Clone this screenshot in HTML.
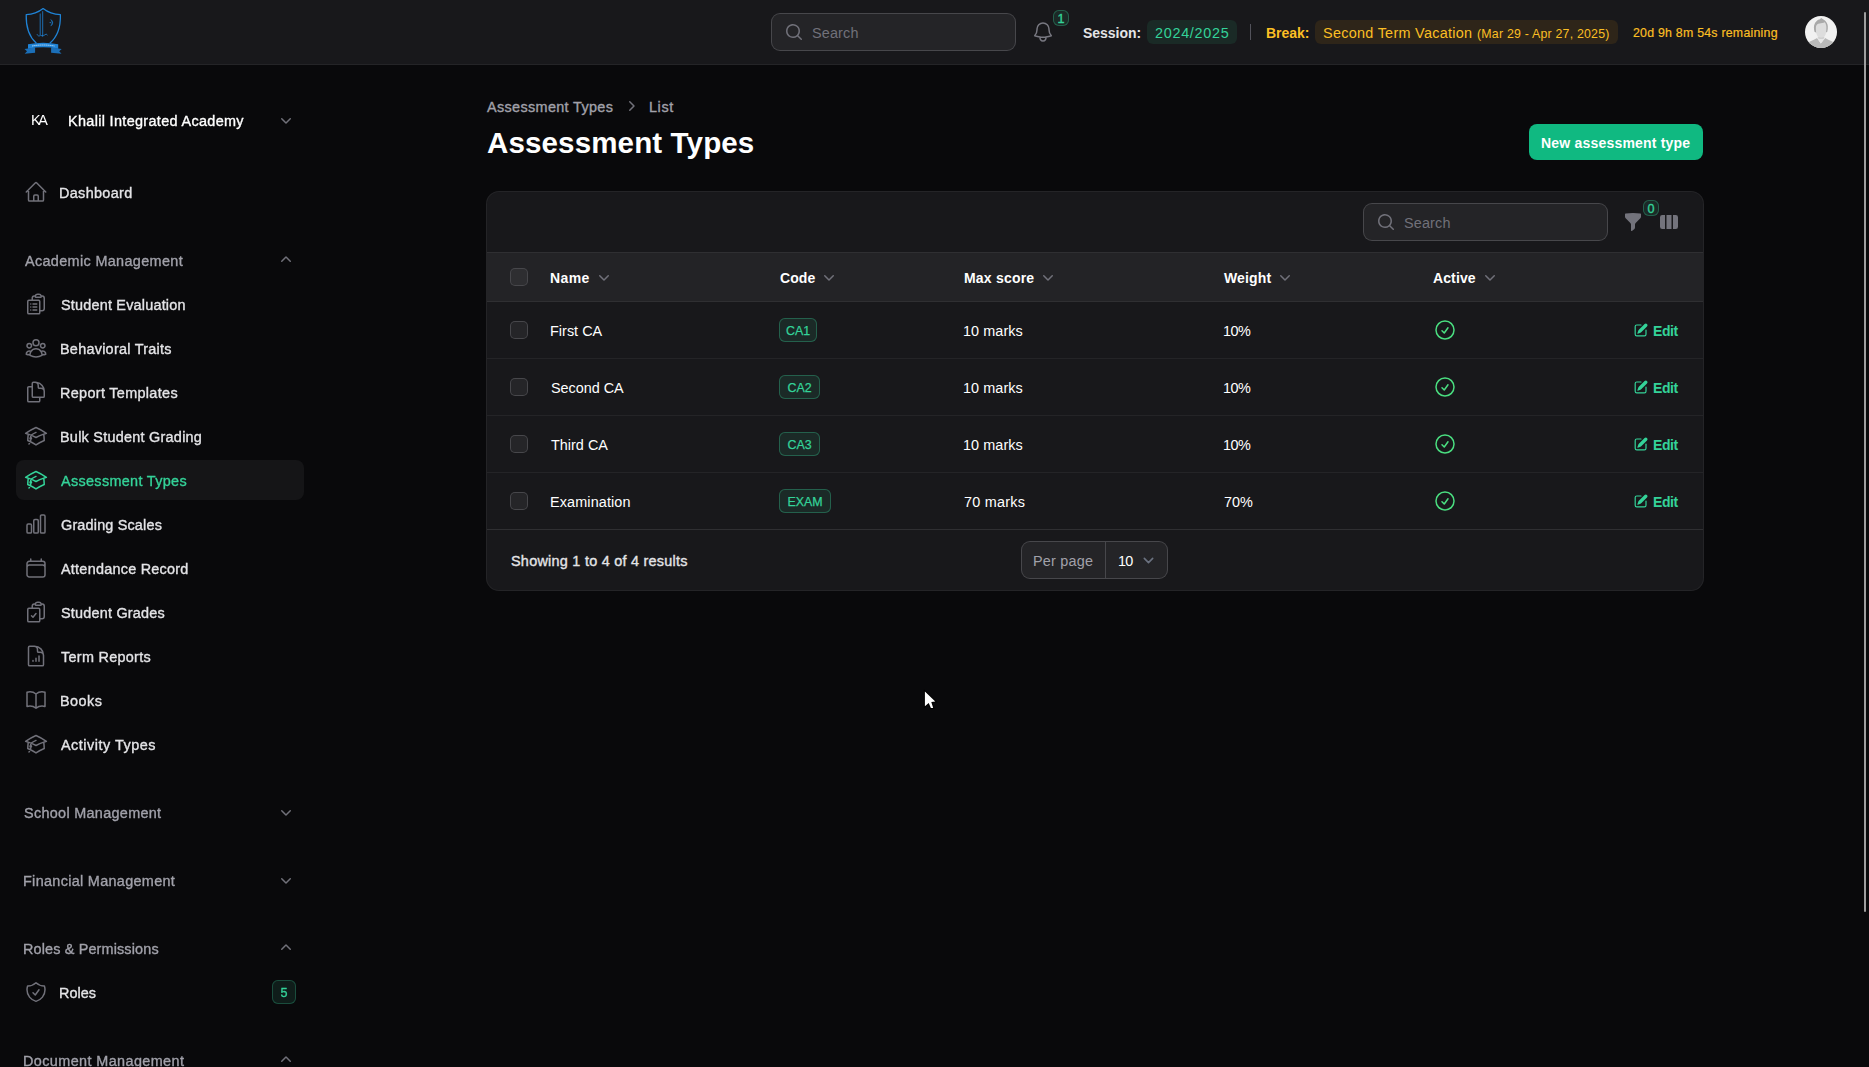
<!DOCTYPE html>
<html lang="en">
<head>
<meta charset="utf-8">
<title>Assessment Types - Khalil Integrated Academy</title>
<style>
*{box-sizing:border-box;margin:0;padding:0}
html,body{width:1869px;height:1067px;overflow:hidden;background:#09090b}
body{font-family:"Liberation Sans",sans-serif;font-size:14px;color:#fff;position:relative;-webkit-font-smoothing:antialiased}
.abs{position:absolute}
#sidebar{will-change:transform}
.t{position:absolute;white-space:nowrap;line-height:20px;height:20px}
.med{-webkit-text-stroke:.35px currentColor}
.med2{-webkit-text-stroke:.18px currentColor}
svg{display:block;position:absolute;overflow:visible}
.o{fill:none;stroke:currentColor;stroke-width:1.5;stroke-linecap:round;stroke-linejoin:round}
.f{fill:currentColor}
/* topbar */
#topbar{left:0;top:0;width:1869px;height:65px;background:#18181b;border-bottom:1px solid #242427}
.input{position:absolute;background:#242427;border-radius:8px;box-shadow:0 0 0 1px #47474b}
.ph{color:#71717a;font-size:15px}
.g4{color:#a1a1aa}.g5{color:#71717a}.g2{color:#e4e4e7}
.em{color:#34d399}
.badge{position:absolute;border-radius:6px;font-size:12.6px;text-align:center}
/* sidebar */
.si{position:absolute;left:24px;width:24px;height:24px;color:#71717a}
.sl{left:60px;color:#e4e4e7}
.gl{left:24px;color:#a1a1aa}
.chev{position:absolute;left:276px;width:20px;height:20px;color:#71717a}
/* table */
#card{left:487px;top:192px;width:1216px;height:398px;background:#18181b;border-radius:12px;box-shadow:0 0 0 1px #242427}
.hl{position:absolute;left:0;width:1216px;height:1px;background:#2b2b2e}
.cb{position:absolute;left:23px;width:17px;height:17px;border-radius:4px;background:#2a2a2d;box-shadow:0 0 0 1px #47474b}
.th{font-weight:700;color:#fff}
.td{color:#fff}
.code{position:absolute;height:24px;border-radius:6px;background:#1b2a27;box-shadow:inset 0 0 0 1px #24604c;color:#34d399;font-size:12.4px;letter-spacing:0px;line-height:26px;text-align:center;-webkit-text-stroke:.25px currentColor}
</style>
</head>
<body>
<!-- TOPBAR -->
<header id="topbar" class="abs">

<svg style="left:20px;top:4px" width="48" height="56" viewBox="20 4 48 56">
<path d="M43.1 8.6C38.4 12.4 32.4 14.5 26.2 14.7C25.9 25.5 29 36.6 36.4 43.2M43.1 8.6C47.8 12.4 53.8 14.5 60.4 14.7C60.7 25.5 57.6 36.6 49.8 43.2" fill="none" stroke="#1f83d6" stroke-width="1.25" stroke-linejoin="round"/>
<path d="M40.2 13.5V35.5M42.7 11.2V36.8" fill="none" stroke="#1f83d6" stroke-width=".8"/>
<path d="M37 34.2c.8 1.8 2.2 2.3 3.2 1.2M40.5 35.6c2 .3 4.2-.2 5.6-1.6l1.4 1.2" fill="none" stroke="#1f83d6" stroke-width=".8"/>
<path d="M50.6 19.4a3.6 3.6 0 0 1 0 6.6a4.6 4.6 0 0 0 0-6.6Z" fill="#1f83d6" stroke="#1f83d6" stroke-width=".3"/>
<circle cx="50.2" cy="22.6" r=".7" fill="#1f83d6"/>
<path d="M24.5 48.9l10.6-1.3v5.2l-10.4 1l2.3-2.6Z" fill="#1b6fb8"/>
<path d="M61.7 48.9l-10.6-1.3v5.2l10.4 1l-2.3-2.6Z" fill="#1b6fb8"/>
<path d="M28 44.2Q43.1 41.2 58.2 44.2V48.7Q43.1 45.9 28 48.7Z" fill="#1f83d6"/>
<path d="M32 46Q43.1 44 54.6 46" fill="none" stroke="#cfe6f8" stroke-width=".8" stroke-dasharray="1.6 .4"/>
</svg><div class="input" style="left:772px;top:14px;width:243px;height:36px"></div><svg style="left:784px;top:22px;color:#71717a" width="20" height="20" viewBox="0 0 20 20"><path class="f" fill-rule="evenodd" clip-rule="evenodd" d="M9 3.5a5.5 5.5 0 1 0 0 11 5.5 5.5 0 0 0 0-11ZM2 9a7 7 0 1 1 12.452 4.391l3.328 3.329a.75.75 0 1 1-1.06 1.06l-3.329-3.328A7 7 0 0 1 2 9Z"/></svg><svg style="left:1031px;top:20px;color:#787881" width="24" height="24" viewBox="0 0 24 24"><path class="o" stroke-width="1.5" d="M14.857 17.082a23.848 23.848 0 0 0 5.454-1.31A8.967 8.967 0 0 1 18 9.75V9A6 6 0 0 0 6 9v.75a8.967 8.967 0 0 1-2.312 6.022c1.733.64 3.56 1.085 5.455 1.31m5.714 0a24.255 24.255 0 0 1-5.714 0m5.714 0a3 3 0 1 1-5.714 0"/></svg><div class="badge em med" style="left:1053px;top:10px;width:16px;height:16px;line-height:18px;background:#1b2a27;box-shadow:inset 0 0 0 1px #24604c">1</div><div class="abs" style="left:1147px;top:20px;width:90px;height:24px;border-radius:6px;background:#1a2a26"></div><div class="abs" style="left:1250px;top:24px;width:1px;height:16px;background:#52525b"></div><div class="abs" style="left:1315px;top:20px;width:303px;height:24px;border-radius:6px;background:#2e2519"></div><svg style="left:1805px;top:16px" width="32" height="32" viewBox="0 0 32 32">
<defs><clipPath id="avc"><circle cx="16" cy="16" r="16"/></clipPath></defs>
<g clip-path="url(#avc)"><rect width="32" height="32" fill="#f1f1f1"/>
<path d="M2.5 28C3.6 25.8 6 24.9 8.4 24.1L12.1 22.1 15.8 27.4 20.1 22.1 23.8 24.1C26.2 24.9 28.6 25.8 29.7 28V33H2.5Z" fill="#b9b9b9"/>
<path d="M12.1 22.1L15.8 27.5 20.1 22.1 19.4 20.6H12.8Z" fill="#e7e7e7"/>
<path d="M13.2 20.5H19V22.4Q16.1 23.5 13.2 22.4Z" fill="#d0d0d0"/>
<path d="M9.5 15.8C8.7 12.4 8.7 9.8 9.6 8 10.5 6.1 11.9 4.5 13.2 3.8L14.5 3.4 16.2 2.1 17.7 3.1C19.3 3.9 20.7 5.1 21.7 6.7 22.9 8.7 23.3 11.2 22.3 15.8L21 16.6H11Z" fill="#a9a9a9"/>
<path d="M10.9 11.2C11 8.9 12.6 7.5 14.6 7.4 16.4 7.3 18.4 7.1 19.7 6.3 20.9 7.7 21.4 9.5 21.4 11.5 21.4 13.6 21.3 15.6 20.9 17.4 20.5 19.6 19 21.5 16.1 21.6 13.2 21.5 11.8 19.6 11.4 17.4 10.9 15.6 10.9 13.6 10.9 11.2Z" fill="#dddddd"/>
</g></svg>
<div class="t" style="left:812.0px;top:23.0px;font-size:14.42px;font-weight:400;letter-spacing:0.15px;color:#71717a">Search</div>
<div class="t" style="left:1083.0px;top:23.0px;font-size:14.0px;font-weight:700;letter-spacing:-0.03px;color:#e4e4e7">Session:</div>
<div class="t" style="left:1155.0px;top:23.0px;font-size:14.42px;font-weight:400;letter-spacing:0.70px;color:#34d399">2024/2025</div>
<div class="t" style="left:1266.0px;top:23.0px;font-size:14.0px;font-weight:700;letter-spacing:-0.02px;color:#fbbf24">Break:</div>
<div class="t" style="left:1323.0px;top:23.0px;font-size:14.42px;font-weight:400;letter-spacing:0.29px;color:#fbbf24">Second Term Vacation</div>
<div class="t" style="left:1477.0px;top:23.5px;font-size:12.36px;font-weight:400;letter-spacing:0.21px;color:#fbbf24">(Mar 29 - Apr 27, 2025)</div>
<div class="t med2" style="left:1633.0px;top:23.0px;font-size:12.36px;font-weight:400;letter-spacing:0.23px;color:#fbbf24">20d 9h 8m 54s remaining</div>

</header>
<!-- SIDEBAR -->
<nav id="sidebar" class="abs" style="left:0;top:65px;width:320px;height:1002px">
<svg style="left:276px;top:45px;color:#71717a" width="20" height="20" viewBox="0 0 20 20"><path class="f" fill-rule="evenodd" clip-rule="evenodd" d="M5.22 8.22a.75.75 0 0 1 1.06 0L10 11.94l3.72-3.72a.75.75 0 1 1 1.06 1.06l-4.25 4.25a.75.75 0 0 1-1.06 0L5.22 9.28a.75.75 0 0 1 0-1.06Z"/></svg><svg style="left:24px;top:115px;color:#71717a" width="24" height="24" viewBox="0 0 24 24"><path class="o" stroke-width="1.5" d="m2.25 12 8.954-8.955c.44-.439 1.152-.439 1.591 0L21.75 12M4.5 9.75v10.125c0 .621.504 1.125 1.125 1.125H9.75v-4.875c0-.621.504-1.125 1.125-1.125h2.25c.621 0 1.125.504 1.125 1.125V21h4.125c.621 0 1.125-.504 1.125-1.125V9.75M8.25 21h8.25"/></svg><svg style="left:276px;top:185px;color:#71717a" width="20" height="20" viewBox="0 0 20 20"><path class="f" fill-rule="evenodd" clip-rule="evenodd" d="M9.47 6.47a.75.75 0 0 1 1.06 0l4.25 4.25a.75.75 0 1 1-1.06 1.06L10 8.06l-3.72 3.72a.75.75 0 0 1-1.06-1.06l4.25-4.25Z"/></svg><div class="abs" style="left:16px;top:395px;width:288px;height:40px;border-radius:8px;background:#151517"></div><svg style="left:24px;top:227px;color:#71717a" width="24" height="24" viewBox="0 0 24 24"><path class="o" stroke-width="1.5" d="M9 12h3.75M9 15h3.75M9 18h3.75m3 .75H18a2.25 2.25 0 0 0 2.25-2.25V6.108c0-1.135-.845-2.098-1.976-2.192a48.424 48.424 0 0 0-1.123-.08m-5.801 0c-.065.21-.1.433-.1.664 0 .414.336.75.75.75h4.5a.75.75 0 0 0 .75-.75 2.25 2.25 0 0 0-.1-.664m-5.8 0A2.251 2.251 0 0 1 13.5 2.25H15c1.012 0 1.867.668 2.15 1.586m-5.8 0c-.376.023-.75.05-1.124.08C9.095 4.01 8.25 4.973 8.25 6.108V8.25m0 0H4.875c-.621 0-1.125.504-1.125 1.125v11.25c0 .621.504 1.125 1.125 1.125h9.75c.621 0 1.125-.504 1.125-1.125V9.375c0-.621-.504-1.125-1.125-1.125H8.25ZM6.75 12h.008v.008H6.75V12Zm0 3h.008v.008H6.75V15Zm0 3h.008v.008H6.75V18Z"/></svg><svg style="left:24px;top:271px;color:#71717a" width="24" height="24" viewBox="0 0 24 24"><path class="o" stroke-width="1.5" d="M18 18.72a9.094 9.094 0 0 0 3.741-.479 3 3 0 0 0-4.682-2.72m.94 3.198.001.031c0 .225-.012.447-.037.666A11.944 11.944 0 0 1 12 21c-2.17 0-4.207-.576-5.963-1.584A6.062 6.062 0 0 1 6 18.719m12 0a5.971 5.971 0 0 0-.941-3.197m0 0A5.995 5.995 0 0 0 12 12.75a5.995 5.995 0 0 0-5.058 2.772m0 0a3 3 0 0 0-4.681 2.72 8.986 8.986 0 0 0 3.74.477m.94-3.197a5.971 5.971 0 0 0-.94 3.197M15 6.75a3 3 0 1 1-6 0 3 3 0 0 1 6 0Zm6 3a2.25 2.25 0 1 1-4.5 0 2.25 2.25 0 0 1 4.5 0Zm-13.5 0a2.25 2.25 0 1 1-4.5 0 2.25 2.25 0 0 1 4.5 0Z"/></svg><svg style="left:24px;top:315px;color:#71717a" width="24" height="24" viewBox="0 0 24 24"><path class="o" stroke-width="1.5" d="M15.75 17.25v3.375c0 .621-.504 1.125-1.125 1.125h-9.75a1.125 1.125 0 0 1-1.125-1.125V7.875c0-.621.504-1.125 1.125-1.125H6.75a9.06 9.06 0 0 1 1.5.124m7.5 10.376h3.375c.621 0 1.125-.504 1.125-1.125V11.25c0-4.46-3.243-8.161-7.5-8.876a9.06 9.06 0 0 0-1.5-.124H9.375c-.621 0-1.125.504-1.125 1.125v3.5m7.5 10.375H9.375a1.125 1.125 0 0 1-1.125-1.125v-9.25m12 6.625v-1.875a3.375 3.375 0 0 0-3.375-3.375h-1.5a1.125 1.125 0 0 1-1.125-1.125v-1.5a3.375 3.375 0 0 0-3.375-3.375H9.75"/></svg><svg style="left:24px;top:359px;color:#71717a" width="24" height="24" viewBox="0 0 24 24"><path class="o" stroke-width="1.5" d="M4.26 10.147a60.438 60.438 0 0 0-.491 6.347A48.62 48.62 0 0 1 12 20.904a48.62 48.62 0 0 1 8.232-4.41 60.46 60.46 0 0 0-.491-6.347m-15.482 0a50.636 50.636 0 0 0-2.658-.813A59.906 59.906 0 0 1 12 3.493a59.903 59.903 0 0 1 10.399 5.84c-.896.248-1.783.52-2.658.814m-15.482 0A50.717 50.717 0 0 1 12 13.489a50.702 50.702 0 0 1 7.74-3.342M6.75 15a.75.75 0 1 0 0-1.5.75.75 0 0 0 0 1.5Zm0 0v-3.675A55.378 55.378 0 0 1 12 8.443m-7.007 11.55A5.981 5.981 0 0 0 6.75 15.75v-1.5"/></svg><svg style="left:24px;top:403px;color:#34d399" width="24" height="24" viewBox="0 0 24 24"><path class="o" stroke-width="1.5" d="M4.26 10.147a60.438 60.438 0 0 0-.491 6.347A48.62 48.62 0 0 1 12 20.904a48.62 48.62 0 0 1 8.232-4.41 60.46 60.46 0 0 0-.491-6.347m-15.482 0a50.636 50.636 0 0 0-2.658-.813A59.906 59.906 0 0 1 12 3.493a59.903 59.903 0 0 1 10.399 5.84c-.896.248-1.783.52-2.658.814m-15.482 0A50.717 50.717 0 0 1 12 13.489a50.702 50.702 0 0 1 7.74-3.342M6.75 15a.75.75 0 1 0 0-1.5.75.75 0 0 0 0 1.5Zm0 0v-3.675A55.378 55.378 0 0 1 12 8.443m-7.007 11.55A5.981 5.981 0 0 0 6.75 15.75v-1.5"/></svg><svg style="left:24px;top:447px;color:#71717a" width="24" height="24" viewBox="0 0 24 24"><path class="o" stroke-width="1.5" d="M3 13.125C3 12.504 3.504 12 4.125 12h2.25c.621 0 1.125.504 1.125 1.125v6.75C7.5 20.496 6.996 21 6.375 21h-2.25A1.125 1.125 0 0 1 3 19.875v-6.75ZM9.75 8.625c0-.621.504-1.125 1.125-1.125h2.25c.621 0 1.125.504 1.125 1.125v11.25c0 .621-.504 1.125-1.125 1.125h-2.25a1.125 1.125 0 0 1-1.125-1.125V8.625ZM16.5 4.125c0-.621.504-1.125 1.125-1.125h2.25C20.496 3 21 3.504 21 4.125v15.75c0 .621-.504 1.125-1.125 1.125h-2.25a1.125 1.125 0 0 1-1.125-1.125V4.125Z"/></svg><svg style="left:24px;top:491px;color:#71717a" width="24" height="24" viewBox="0 0 24 24"><path class="o" stroke-width="1.5" d="M6.75 3v2.25M17.25 3v2.25M3 18.75V7.5a2.25 2.25 0 0 1 2.25-2.25h13.5A2.25 2.25 0 0 1 21 7.5v11.25m-18 0A2.25 2.25 0 0 0 5.25 21h13.5A2.25 2.25 0 0 0 21 18.75m-18 0v-7.5A2.25 2.25 0 0 1 5.25 9h13.5A2.25 2.25 0 0 1 21 11.25v7.5"/></svg><svg style="left:24px;top:535px;color:#71717a" width="24" height="24" viewBox="0 0 24 24"><path class="o" stroke-width="1.5" d="M11.35 3.836c-.065.21-.1.433-.1.664 0 .414.336.75.75.75h4.5a.75.75 0 0 0 .75-.75 2.25 2.25 0 0 0-.1-.664m-5.8 0A2.251 2.251 0 0 1 13.5 2.25H15c1.012 0 1.867.668 2.15 1.586m-5.8 0c-.376.023-.75.05-1.124.08C9.095 4.01 8.25 4.973 8.25 6.108V8.25m8.9-4.414c.376.023.75.05 1.124.08 1.131.094 1.976 1.057 1.976 2.192V16.5A2.25 2.25 0 0 1 18 18.75h-2.25m-7.5-10.5H4.875c-.621 0-1.125.504-1.125 1.125v11.25c0 .621.504 1.125 1.125 1.125h9.75c.621 0 1.125-.504 1.125-1.125V18.75m-7.5-10.5h6.375c.621 0 1.125.504 1.125 1.125v9.375m-8.25-3 1.5 1.5 3-3.75"/></svg><svg style="left:24px;top:579px;color:#71717a" width="24" height="24" viewBox="0 0 24 24"><path class="o" stroke-width="1.5" d="M19.5 14.25v-2.625a3.375 3.375 0 0 0-3.375-3.375h-1.5A1.125 1.125 0 0 1 13.5 7.125v-1.5a3.375 3.375 0 0 0-3.375-3.375H8.25M9 16.5v.75m3-3v3M15 12v5.25m-4.5-15H5.625c-.621 0-1.125.504-1.125 1.125v17.25c0 .621.504 1.125 1.125 1.125h12.75c.621 0 1.125-.504 1.125-1.125V11.25a9 9 0 0 0-9-9Z"/></svg><svg style="left:24px;top:623px;color:#71717a" width="24" height="24" viewBox="0 0 24 24"><path class="o" stroke-width="1.5" d="M12 6.042A8.967 8.967 0 0 0 6 3.75c-1.052 0-2.062.18-3 .512v14.25A8.987 8.987 0 0 1 6 18c2.305 0 4.408.867 6 2.292m0-14.25a8.966 8.966 0 0 1 6-2.292c1.052 0 2.062.18 3 .512v14.25A8.987 8.987 0 0 0 18 18a8.967 8.967 0 0 0-6 2.292m0-14.25v14.25"/></svg><svg style="left:24px;top:667px;color:#71717a" width="24" height="24" viewBox="0 0 24 24"><path class="o" stroke-width="1.5" d="M4.26 10.147a60.438 60.438 0 0 0-.491 6.347A48.62 48.62 0 0 1 12 20.904a48.62 48.62 0 0 1 8.232-4.41 60.46 60.46 0 0 0-.491-6.347m-15.482 0a50.636 50.636 0 0 0-2.658-.813A59.906 59.906 0 0 1 12 3.493a59.903 59.903 0 0 1 10.399 5.84c-.896.248-1.783.52-2.658.814m-15.482 0A50.717 50.717 0 0 1 12 13.489a50.702 50.702 0 0 1 7.74-3.342M6.75 15a.75.75 0 1 0 0-1.5.75.75 0 0 0 0 1.5Zm0 0v-3.675A55.378 55.378 0 0 1 12 8.443m-7.007 11.55A5.981 5.981 0 0 0 6.75 15.75v-1.5"/></svg><svg style="left:276px;top:737px;color:#71717a" width="20" height="20" viewBox="0 0 20 20"><path class="f" fill-rule="evenodd" clip-rule="evenodd" d="M5.22 8.22a.75.75 0 0 1 1.06 0L10 11.94l3.72-3.72a.75.75 0 1 1 1.06 1.06l-4.25 4.25a.75.75 0 0 1-1.06 0L5.22 9.28a.75.75 0 0 1 0-1.06Z"/></svg><svg style="left:276px;top:805px;color:#71717a" width="20" height="20" viewBox="0 0 20 20"><path class="f" fill-rule="evenodd" clip-rule="evenodd" d="M5.22 8.22a.75.75 0 0 1 1.06 0L10 11.94l3.72-3.72a.75.75 0 1 1 1.06 1.06l-4.25 4.25a.75.75 0 0 1-1.06 0L5.22 9.28a.75.75 0 0 1 0-1.06Z"/></svg><svg style="left:276px;top:873px;color:#71717a" width="20" height="20" viewBox="0 0 20 20"><path class="f" fill-rule="evenodd" clip-rule="evenodd" d="M9.47 6.47a.75.75 0 0 1 1.06 0l4.25 4.25a.75.75 0 1 1-1.06 1.06L10 8.06l-3.72 3.72a.75.75 0 0 1-1.06-1.06l4.25-4.25Z"/></svg><svg style="left:24px;top:915px;color:#71717a" width="24" height="24" viewBox="0 0 24 24"><path class="o" stroke-width="1.5" d="M9 12.75 11.25 15 15 9.75m-3-7.036A11.959 11.959 0 0 1 3.598 6 11.99 11.99 0 0 0 3 9.749c0 5.592 3.824 10.29 9 11.623 5.176-1.332 9-6.03 9-11.622 0-1.31-.21-2.571-.598-3.751h-.152c-3.196 0-6.1-1.248-8.25-3.285Z"/></svg><div class="badge em med" style="left:272px;top:915px;width:24px;height:24px;line-height:26px;background:#0f1d1a;box-shadow:inset 0 0 0 1px #1a4d3d">5</div><svg style="left:276px;top:985px;color:#71717a" width="20" height="20" viewBox="0 0 20 20"><path class="f" fill-rule="evenodd" clip-rule="evenodd" d="M9.47 6.47a.75.75 0 0 1 1.06 0l4.25 4.25a.75.75 0 1 1-1.06 1.06L10 8.06l-3.72 3.72a.75.75 0 0 1-1.06-1.06l4.25-4.25Z"/></svg>
<div class="t" style="left:31.0px;top:45.0px;font-size:14.42px;font-weight:400;letter-spacing:-2.41px;color:#fff">KA</div>
<div class="t med" style="left:68.0px;top:46.0px;font-size:14.42px;font-weight:400;letter-spacing:0.34px;color:#fff">Khalil Integrated Academy</div>
<div class="t med" style="left:59.0px;top:118.0px;font-size:14.42px;font-weight:400;letter-spacing:0.34px;color:#e4e4e7">Dashboard</div>
<div class="t med" style="left:25.0px;top:186.0px;font-size:14.42px;font-weight:400;letter-spacing:0.35px;color:#a1a1aa">Academic Management</div>
<div class="t med" style="left:61.0px;top:230.0px;font-size:14.42px;font-weight:400;letter-spacing:0.21px;color:#e4e4e7">Student Evaluation</div>
<div class="t med" style="left:60.0px;top:274.0px;font-size:14.42px;font-weight:400;letter-spacing:0.26px;color:#e4e4e7">Behavioral Traits</div>
<div class="t med" style="left:60.0px;top:318.0px;font-size:14.42px;font-weight:400;letter-spacing:0.33px;color:#e4e4e7">Report Templates</div>
<div class="t med" style="left:60.0px;top:362.0px;font-size:14.42px;font-weight:400;letter-spacing:0.26px;color:#e4e4e7">Bulk Student Grading</div>
<div class="t med" style="left:61.0px;top:406.0px;font-size:14.42px;font-weight:400;letter-spacing:0.33px;color:#34d399">Assessment Types</div>
<div class="t med" style="left:61.0px;top:450.0px;font-size:14.42px;font-weight:400;letter-spacing:0.18px;color:#e4e4e7">Grading Scales</div>
<div class="t med" style="left:61.0px;top:494.0px;font-size:14.42px;font-weight:400;letter-spacing:0.25px;color:#e4e4e7">Attendance Record</div>
<div class="t med" style="left:61.0px;top:538.0px;font-size:14.42px;font-weight:400;letter-spacing:0.22px;color:#e4e4e7">Student Grades</div>
<div class="t med" style="left:61.0px;top:582.0px;font-size:14.42px;font-weight:400;letter-spacing:0.29px;color:#e4e4e7">Term Reports</div>
<div class="t med" style="left:60.0px;top:626.0px;font-size:14.42px;font-weight:400;letter-spacing:0.47px;color:#e4e4e7">Books</div>
<div class="t med" style="left:61.0px;top:670.0px;font-size:14.42px;font-weight:400;letter-spacing:0.51px;color:#e4e4e7">Activity Types</div>
<div class="t med" style="left:24.0px;top:738.0px;font-size:14.42px;font-weight:400;letter-spacing:0.31px;color:#a1a1aa">School Management</div>
<div class="t med" style="left:23.0px;top:806.0px;font-size:14.42px;font-weight:400;letter-spacing:0.32px;color:#a1a1aa">Financial Management</div>
<div class="t med" style="left:23.0px;top:874.0px;font-size:14.42px;font-weight:400;letter-spacing:0.15px;color:#a1a1aa">Roles &amp; Permissions</div>
<div class="t med" style="left:59.0px;top:918.0px;font-size:14.42px;font-weight:400;letter-spacing:0.04px;color:#e4e4e7">Roles</div>
<div class="t med" style="left:23.0px;top:986.0px;font-size:14.42px;font-weight:400;letter-spacing:0.40px;color:#a1a1aa">Document Management</div>

</nav>
<!-- MAIN -->
<main id="main" class="abs" style="left:0;top:0;width:0;height:0">
<svg style="left:620.5px;top:96px;color:#71717a" width="20" height="20" viewBox="0 0 20 20"><path class="f" fill-rule="evenodd" clip-rule="evenodd" d="M8.22 5.22a.75.75 0 0 1 1.06 0l4.25 4.25a.75.75 0 0 1 0 1.06l-4.25 4.25a.75.75 0 0 1-1.06-1.06L11.94 10 8.22 6.28a.75.75 0 0 1 0-1.06Z"/></svg><div class="abs" style="left:1529px;top:124px;width:174px;height:36px;border-radius:8px;background:#10b981"></div><div id="card" class="abs"><div class="input" style="left:877px;top:12px;width:243px;height:36px"></div><svg style="left:889px;top:20px;color:#71717a" width="20" height="20" viewBox="0 0 20 20"><path class="f" fill-rule="evenodd" clip-rule="evenodd" d="M9 3.5a5.5 5.5 0 1 0 0 11 5.5 5.5 0 0 0 0-11ZM2 9a7 7 0 1 1 12.452 4.391l3.328 3.329a.75.75 0 1 1-1.06 1.06l-3.329-3.328A7 7 0 0 1 2 9Z"/></svg><svg style="left:1136px;top:19.5px;color:#73737c" width="20" height="20" viewBox="0 0 20 20"><path class="f" fill-rule="evenodd" clip-rule="evenodd" d="M2.628 1.601C5.028 1.206 7.49 1 10 1s4.973.206 7.372.601a.75.75 0 0 1 .628.74v2.288a2.25 2.25 0 0 1-.659 1.59l-4.682 4.683a2.25 2.25 0 0 0-.659 1.59v3.037c0 .684-.31 1.33-.844 1.757l-1.937 1.55A.75.75 0 0 1 8 18.25v-5.757a2.25 2.25 0 0 0-.659-1.591L2.659 6.22A2.25 2.25 0 0 1 2 4.629V2.34a.75.75 0 0 1 .628-.74Z"/></svg><div class="badge em med" style="left:1156px;top:8px;width:16px;height:16px;line-height:18px;background:#1b2a27;box-shadow:inset 0 0 0 1px #24604c">0</div><svg style="left:1172px;top:20px;color:#73737c" width="20" height="20" viewBox="0 0 20 20"><path class="f" fill-rule="evenodd" clip-rule="evenodd" d="M14 17h2.75A2.25 2.25 0 0 0 19 14.75v-9.5A2.25 2.25 0 0 0 16.75 3H14v14ZM12.5 3h-5v14h5V3ZM3.25 3H6v14H3.25A2.25 2.25 0 0 1 1 14.75v-9.5A2.25 2.25 0 0 1 3.25 3Z"/></svg><div class="hl" style="top:60px;background:#2f2f32"></div><div class="abs" style="left:0;top:61px;width:1216px;height:48px;background:#232326"></div><div class="hl" style="top:109px;background:#2f2f32"></div><div class="hl" style="top:166px;background:#242427"></div><div class="hl" style="top:223px;background:#242427"></div><div class="hl" style="top:280px;background:#242427"></div><div class="hl" style="top:337px;background:#2f2f32"></div><div class="cb" style="left:24px;top:77px;width:16px;height:16px;background:#2e2e31"></div><div class="cb" style="left:24px;top:130px;width:16px;height:16px;background:#252528"></div><div class="cb" style="left:24px;top:187px;width:16px;height:16px;background:#252528"></div><div class="cb" style="left:24px;top:244px;width:16px;height:16px;background:#252528"></div><div class="cb" style="left:24px;top:301px;width:16px;height:16px;background:#252528"></div><svg style="left:107px;top:75px;color:#71717a" width="20" height="20" viewBox="0 0 20 20"><path class="f" fill-rule="evenodd" clip-rule="evenodd" d="M5.22 8.22a.75.75 0 0 1 1.06 0L10 11.94l3.72-3.72a.75.75 0 1 1 1.06 1.06l-4.25 4.25a.75.75 0 0 1-1.06 0L5.22 9.28a.75.75 0 0 1 0-1.06Z"/></svg><svg style="left:332px;top:75px;color:#71717a" width="20" height="20" viewBox="0 0 20 20"><path class="f" fill-rule="evenodd" clip-rule="evenodd" d="M5.22 8.22a.75.75 0 0 1 1.06 0L10 11.94l3.72-3.72a.75.75 0 1 1 1.06 1.06l-4.25 4.25a.75.75 0 0 1-1.06 0L5.22 9.28a.75.75 0 0 1 0-1.06Z"/></svg><svg style="left:551px;top:75px;color:#71717a" width="20" height="20" viewBox="0 0 20 20"><path class="f" fill-rule="evenodd" clip-rule="evenodd" d="M5.22 8.22a.75.75 0 0 1 1.06 0L10 11.94l3.72-3.72a.75.75 0 1 1 1.06 1.06l-4.25 4.25a.75.75 0 0 1-1.06 0L5.22 9.28a.75.75 0 0 1 0-1.06Z"/></svg><svg style="left:788px;top:75px;color:#71717a" width="20" height="20" viewBox="0 0 20 20"><path class="f" fill-rule="evenodd" clip-rule="evenodd" d="M5.22 8.22a.75.75 0 0 1 1.06 0L10 11.94l3.72-3.72a.75.75 0 1 1 1.06 1.06l-4.25 4.25a.75.75 0 0 1-1.06 0L5.22 9.28a.75.75 0 0 1 0-1.06Z"/></svg><svg style="left:992.5px;top:75px;color:#71717a" width="20" height="20" viewBox="0 0 20 20"><path class="f" fill-rule="evenodd" clip-rule="evenodd" d="M5.22 8.22a.75.75 0 0 1 1.06 0L10 11.94l3.72-3.72a.75.75 0 1 1 1.06 1.06l-4.25 4.25a.75.75 0 0 1-1.06 0L5.22 9.28a.75.75 0 0 1 0-1.06Z"/></svg><div class="code" style="left:292px;top:126px;width:38px">CA1</div><svg style="left:945.8px;top:126px;color:#4ade80" width="24" height="24" viewBox="0 0 24 24"><path class="o" stroke-width="1.5" d="M9 12.75 11.25 15 15 9.75M21 12a9 9 0 1 1-18 0 9 9 0 0 1 18 0Z"/></svg><svg style="left:1146px;top:130px;color:#34d399" width="16" height="16" viewBox="0 0 20 20"><path class="f" fill-rule="evenodd" clip-rule="evenodd" d="m5.433 13.917 1.262-3.155A4 4 0 0 1 7.58 9.42l6.92-6.918a2.121 2.121 0 0 1 3 3l-6.92 6.918c-.383.383-.84.685-1.343.886l-3.154 1.262a.5.5 0 0 1-.65-.65Z"/><path class="f" fill-rule="evenodd" clip-rule="evenodd" d="M3.5 5.75c0-.69.56-1.25 1.25-1.25H10A.75.75 0 0 0 10 3H4.75A2.75 2.75 0 0 0 2 5.75v9.5A2.75 2.75 0 0 0 4.75 18h9.5A2.75 2.75 0 0 0 17 15.25V10a.75.75 0 0 0-1.5 0v5.25c0 .69-.56 1.25-1.25 1.25h-9.5c-.69 0-1.25-.56-1.25-1.25v-9.5Z"/></svg><div class="code" style="left:292px;top:183px;width:41px">CA2</div><svg style="left:945.8px;top:183px;color:#4ade80" width="24" height="24" viewBox="0 0 24 24"><path class="o" stroke-width="1.5" d="M9 12.75 11.25 15 15 9.75M21 12a9 9 0 1 1-18 0 9 9 0 0 1 18 0Z"/></svg><svg style="left:1146px;top:187px;color:#34d399" width="16" height="16" viewBox="0 0 20 20"><path class="f" fill-rule="evenodd" clip-rule="evenodd" d="m5.433 13.917 1.262-3.155A4 4 0 0 1 7.58 9.42l6.92-6.918a2.121 2.121 0 0 1 3 3l-6.92 6.918c-.383.383-.84.685-1.343.886l-3.154 1.262a.5.5 0 0 1-.65-.65Z"/><path class="f" fill-rule="evenodd" clip-rule="evenodd" d="M3.5 5.75c0-.69.56-1.25 1.25-1.25H10A.75.75 0 0 0 10 3H4.75A2.75 2.75 0 0 0 2 5.75v9.5A2.75 2.75 0 0 0 4.75 18h9.5A2.75 2.75 0 0 0 17 15.25V10a.75.75 0 0 0-1.5 0v5.25c0 .69-.56 1.25-1.25 1.25h-9.5c-.69 0-1.25-.56-1.25-1.25v-9.5Z"/></svg><div class="code" style="left:292px;top:240px;width:41px">CA3</div><svg style="left:945.8px;top:240px;color:#4ade80" width="24" height="24" viewBox="0 0 24 24"><path class="o" stroke-width="1.5" d="M9 12.75 11.25 15 15 9.75M21 12a9 9 0 1 1-18 0 9 9 0 0 1 18 0Z"/></svg><svg style="left:1146px;top:244px;color:#34d399" width="16" height="16" viewBox="0 0 20 20"><path class="f" fill-rule="evenodd" clip-rule="evenodd" d="m5.433 13.917 1.262-3.155A4 4 0 0 1 7.58 9.42l6.92-6.918a2.121 2.121 0 0 1 3 3l-6.92 6.918c-.383.383-.84.685-1.343.886l-3.154 1.262a.5.5 0 0 1-.65-.65Z"/><path class="f" fill-rule="evenodd" clip-rule="evenodd" d="M3.5 5.75c0-.69.56-1.25 1.25-1.25H10A.75.75 0 0 0 10 3H4.75A2.75 2.75 0 0 0 2 5.75v9.5A2.75 2.75 0 0 0 4.75 18h9.5A2.75 2.75 0 0 0 17 15.25V10a.75.75 0 0 0-1.5 0v5.25c0 .69-.56 1.25-1.25 1.25h-9.5c-.69 0-1.25-.56-1.25-1.25v-9.5Z"/></svg><div class="code" style="left:292px;top:297px;width:52px">EXAM</div><svg style="left:945.8px;top:297px;color:#4ade80" width="24" height="24" viewBox="0 0 24 24"><path class="o" stroke-width="1.5" d="M9 12.75 11.25 15 15 9.75M21 12a9 9 0 1 1-18 0 9 9 0 0 1 18 0Z"/></svg><svg style="left:1146px;top:301px;color:#34d399" width="16" height="16" viewBox="0 0 20 20"><path class="f" fill-rule="evenodd" clip-rule="evenodd" d="m5.433 13.917 1.262-3.155A4 4 0 0 1 7.58 9.42l6.92-6.918a2.121 2.121 0 0 1 3 3l-6.92 6.918c-.383.383-.84.685-1.343.886l-3.154 1.262a.5.5 0 0 1-.65-.65Z"/><path class="f" fill-rule="evenodd" clip-rule="evenodd" d="M3.5 5.75c0-.69.56-1.25 1.25-1.25H10A.75.75 0 0 0 10 3H4.75A2.75 2.75 0 0 0 2 5.75v9.5A2.75 2.75 0 0 0 4.75 18h9.5A2.75 2.75 0 0 0 17 15.25V10a.75.75 0 0 0-1.5 0v5.25c0 .69-.56 1.25-1.25 1.25h-9.5c-.69 0-1.25-.56-1.25-1.25v-9.5Z"/></svg><div class="abs" style="left:535px;top:350px;width:145px;height:36px;border-radius:8px;background:#242427;box-shadow:0 0 0 1px #47474b"></div><div class="abs" style="left:618px;top:350px;width:1px;height:36px;background:#47474b"></div><svg style="left:651px;top:357.5px" width="21" height="21" viewBox="0 0 20 20"><path d="M6 8l4 4 4-4" fill="none" stroke="#6b7280" stroke-width="1.5" stroke-linecap="round" stroke-linejoin="round"/></svg></div>
<div class="t med" style="left:487.0px;top:97.0px;font-size:14.42px;font-weight:400;letter-spacing:0.35px;color:#a1a1aa">Assessment Types</div>
<div class="t med" style="left:649.0px;top:97.0px;font-size:14.42px;font-weight:400;letter-spacing:0.59px;color:#a1a1aa">List</div>
<div class="t" style="left:487.0px;top:125.0px;line-height:36px;height:36px;font-size:29.55px;font-weight:700;letter-spacing:0.12px;color:#fff">Assessment Types</div>
<div class="t" style="left:1541.0px;top:133.0px;font-size:14.0px;font-weight:700;letter-spacing:0.20px;color:#fff">New assessment type</div>
<div class="t" style="left:1404.0px;top:213.0px;font-size:14.42px;font-weight:400;letter-spacing:0.15px;color:#71717a">Search</div>
<div class="t" style="left:550.0px;top:268.0px;font-size:14.0px;font-weight:700;letter-spacing:0.39px;color:#fff">Name</div>
<div class="t" style="left:780.0px;top:268.0px;font-size:14.0px;font-weight:700;letter-spacing:0.06px;color:#fff">Code</div>
<div class="t" style="left:964.0px;top:268.0px;font-size:14.0px;font-weight:700;letter-spacing:0.20px;color:#fff">Max score</div>
<div class="t" style="left:1224.0px;top:268.0px;font-size:14.0px;font-weight:700;letter-spacing:0.15px;color:#fff">Weight</div>
<div class="t" style="left:1433.0px;top:268.0px;font-size:14.0px;font-weight:700;letter-spacing:0.11px;color:#fff">Active</div>
<div class="t" style="left:550.0px;top:321.0px;font-size:14.42px;font-weight:400;letter-spacing:0.03px;color:#fff">First CA</div>
<div class="t" style="left:963.0px;top:321.0px;font-size:14.42px;font-weight:400;letter-spacing:0.08px;color:#fff">10 marks</div>
<div class="t" style="left:1223.0px;top:321.0px;font-size:14.42px;font-weight:400;letter-spacing:-0.56px;color:#fff">10%</div>
<div class="t" style="left:1653.0px;top:321.0px;font-size:14.0px;font-weight:700;letter-spacing:-0.43px;color:#34d399">Edit</div>
<div class="t" style="left:551.0px;top:378.0px;font-size:14.42px;font-weight:400;letter-spacing:-0.02px;color:#fff">Second CA</div>
<div class="t" style="left:963.0px;top:378.0px;font-size:14.42px;font-weight:400;letter-spacing:0.08px;color:#fff">10 marks</div>
<div class="t" style="left:1223.0px;top:378.0px;font-size:14.42px;font-weight:400;letter-spacing:-0.56px;color:#fff">10%</div>
<div class="t" style="left:1653.0px;top:378.0px;font-size:14.0px;font-weight:700;letter-spacing:-0.43px;color:#34d399">Edit</div>
<div class="t" style="left:551.0px;top:435.0px;font-size:14.42px;font-weight:400;letter-spacing:0.01px;color:#fff">Third CA</div>
<div class="t" style="left:963.0px;top:435.0px;font-size:14.42px;font-weight:400;letter-spacing:0.08px;color:#fff">10 marks</div>
<div class="t" style="left:1223.0px;top:435.0px;font-size:14.42px;font-weight:400;letter-spacing:-0.56px;color:#fff">10%</div>
<div class="t" style="left:1653.0px;top:435.0px;font-size:14.0px;font-weight:700;letter-spacing:-0.43px;color:#34d399">Edit</div>
<div class="t" style="left:550.0px;top:492.0px;font-size:14.42px;font-weight:400;letter-spacing:0.12px;color:#fff">Examination</div>
<div class="t" style="left:964.0px;top:492.0px;font-size:14.42px;font-weight:400;letter-spacing:0.24px;color:#fff">70 marks</div>
<div class="t" style="left:1224.0px;top:492.0px;font-size:14.42px;font-weight:400;letter-spacing:-0.01px;color:#fff">70%</div>
<div class="t" style="left:1653.0px;top:492.0px;font-size:14.0px;font-weight:700;letter-spacing:-0.43px;color:#34d399">Edit</div>
<div class="t med" style="left:511.0px;top:551.0px;font-size:14.42px;font-weight:400;letter-spacing:0.26px;color:#e4e4e7">Showing 1 to 4 of 4 results</div>
<div class="t" style="left:1033.0px;top:551.0px;font-size:14.42px;font-weight:400;letter-spacing:0.22px;color:#a1a1aa">Per page</div>
<div class="t" style="left:1118.0px;top:551.0px;font-size:14.42px;font-weight:400;letter-spacing:-0.81px;color:#fff">10</div>

</main>
<!-- scrollbar + cursor -->
<div class="abs" style="left:1864px;top:12px;width:2px;height:900px;background:#9e9e9e;border-radius:1px"></div>
<svg style="left:923px;top:689px" width="15" height="22" viewBox="0 0 15 22"><path d="M1.9 2.5V17.3L5.7 14.1 7.9 19.1 10.2 18.9 8.3 13.1 12.3 12.6Z" fill="#fff" stroke="#000" stroke-width="2" stroke-linejoin="miter" paint-order="stroke"/></svg>
</body>
</html>
